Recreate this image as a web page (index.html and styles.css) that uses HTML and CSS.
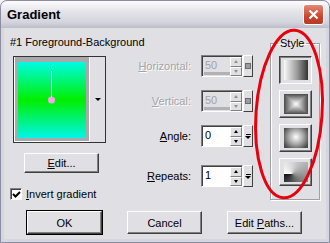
FILE: index.html
```html
<!DOCTYPE html>
<html>
<head>
<title>Gradient</title>
<link rel="stylesheet" href="styles.css">
</head>
<body>
<div class="window">
  <div class="titlebar">
    <span class="title">Gradient</span>
    <span class="close"><svg width="11" height="11"><path d="M1.5 1.5L9.5 9.5M9.5 1.5L1.5 9.5" stroke="#fff" stroke-width="2.2"/></svg></span>
  </div>
  <div class="body">
    <div class="main">
      <div class="leftcol">
        <div class="caption">#1 Foreground-Background</div>
        <div class="preview">
          <div class="swatch">
            <div class="grad">
              <svg width="68" height="76"><line x1="33.5" y1="9" x2="33.5" y2="35" stroke="#fff" stroke-width="1"/><circle cx="33.5" cy="38" r="3.5" fill="#f2a6e6"/></svg>
            </div>
          </div>
          <div class="drop"><i class="tri"></i></div>
        </div>
        <div class="btn edit"><span><u>E</u>dit...</span></div>
        <label class="check"><span class="box"><svg width="9" height="9"><path d="M1 4L3.5 6.5L8 2" stroke="#000" stroke-width="2" fill="none"/></svg></span><span><u>I</u>nvert gradient</span></label>
      </div>

      <div class="fields">
        <span class="lbl off"><u>H</u>orizontal:</span>
        <div class="num off">
          <div class="num-edit"><span class="num-val">50<b class="bar" style="width:26px"></b></span><span class="spin"><i class="up"></i><i class="dn"></i></span></div>
          <span class="pop"><i class="sq"></i></span>
        </div>
        <span class="lbl off"><u>V</u>ertical:</span>
        <div class="num off">
          <div class="num-edit"><span class="num-val">50<b class="bar" style="width:26px"></b></span><span class="spin"><i class="up"></i><i class="dn"></i></span></div>
          <span class="pop"><i class="sq"></i></span>
        </div>
        <span class="lbl"><u>A</u>ngle:</span>
        <div class="num">
          <div class="num-edit"><span class="num-val">0</span><span class="spin"><i class="up"></i><i class="dn"></i></span></div>
          <span class="pop"><i class="pbar"></i><i class="dn"></i></span>
        </div>
        <span class="lbl gap"><u>R</u>epeats:</span>
        <div class="num gap">
          <div class="num-edit"><span class="num-val">1</span><span class="spin"><i class="up"></i><i class="dn"></i></span></div>
          <span class="pop"><i class="pbar"></i><i class="dn"></i></span>
        </div>
      </div>

      <fieldset class="style">
        <legend>Style</legend>
        <div class="sbtn on"><span class="sw sw-linear"></span></div>
        <div class="sbtn"><span class="sw sw-rect"></span></div>
        <div class="sbtn"><span class="sw sw-radial"></span></div>
        <div class="sbtn"><span class="sw sw-conic"></span></div>
      </fieldset>
    </div>

    <div class="buttons">
      <div class="btn default"><span>OK</span></div>
      <div class="btn"><span>Cancel</span></div>
      <div class="btn"><span>Edit <u>P</u>aths...</span></div>
    </div>
  </div>

  <svg class="mark" width="330" height="243"><ellipse cx="289" cy="114" rx="33" ry="84" transform="rotate(4 289 114)" fill="none" stroke="#e8000e" stroke-width="3"/></svg>
</div>
</body>
</html>
```

FILE: styles.css
```css
html, body {
  margin: 0;
  padding: 0;
  background: #f2f2f4;
}

.window {
  position: relative;
  width: 330px;
  height: 243px;
  box-sizing: border-box;
  border: 1px solid #8c8ca2;
  border-radius: 7px 7px 0 0;
  background: #d6d6e0;
  display: flex;
  flex-direction: column;
  font-family: "Liberation Sans", Arial, sans-serif;
  font-size: 11px;
  color: #000;
  overflow: hidden;
}

.titlebar {
  height: 27px;
  flex: none;
  display: flex;
  align-items: center;
  justify-content: space-between;
  padding: 0 5px 0 6px;
  background: linear-gradient(#fdfdfe, #e6e6ec 35%, #d3d3dc 80%, #bdbdca);
  border-radius: 6px 6px 0 0;
}

.title {
  font-weight: bold;
  font-size: 13px;
  color: #000;
}

.close {
  width: 19px;
  height: 19px;
  display: flex;
  align-items: center;
  justify-content: center;
  border: 1px solid #fff;
  border-radius: 3px;
  background: linear-gradient(#e48a76, #c9452f 60%, #b83a26);
}

.body {
  flex: 1;
  margin: 0 3px 3px;
  background: #e0dfe3;
  display: flex;
  flex-direction: column;
}

.main {
  height: 183px;
  display: flex;
  align-items: flex-start;
}

/* left column */
.leftcol {
  width: 100px;
  margin-left: 6px;
  padding-top: 7px;
  display: flex;
  flex-direction: column;
}
.caption {
  line-height: 14px;
  white-space: nowrap;
}
.preview {
  margin: 7px 0 0 3px;
  width: 93px;
  height: 87px;
  box-sizing: border-box;
  border: 1px solid #333;
  display: flex;
}
.swatch {
  width: 76px;
  box-sizing: border-box;
  background: #a9a9ab;
  border: 1px solid #fff;
  border-top: 0;
  padding: 5px 3px 3px 3px;
}
.grad {
  width: 68px;
  height: 76px;
  background: linear-gradient(#00fbe4, #00ef00 50%, #00f6e8);
}
.grad svg { display: block; }
.drop {
  flex: 1;
  background: #e0dfe3;
  display: flex;
  align-items: center;
  justify-content: center;
}
.tri {
  border-left: 3px solid transparent;
  border-right: 3px solid transparent;
  border-top: 3px solid #000;
}

.btn {
  height: 23px;
  width: 75px;
  box-sizing: border-box;
  border: 1px solid;
  border-color: #fff #404040 #404040 #fff;
  box-shadow: inset -1px -1px 0 #808080;
  display: flex;
  align-items: center;
  justify-content: center;
  background: #e0dfe3;
  white-space: nowrap;
}
.btn.edit {
  height: 20px;
  margin: 10px 0 0 14px;
}
.btn.default {
  outline: 1px solid #000;
}

.check {
  margin-top: 15px;
  display: flex;
  align-items: center;
  height: 12px;
  white-space: nowrap;
}
.box {
  width: 12px;
  height: 12px;
  box-sizing: border-box;
  margin-right: 4px;
  background: #fff;
  border: 1px solid;
  border-color: #808080 #fff #fff #808080;
  box-shadow: inset 1px 1px 0 #404040;
  display: flex;
  align-items: center;
  justify-content: center;
}
.box svg { display: block; margin: 1px 0 0 1px; }

/* numeric fields */
.fields {
  width: 143px;
  padding-top: 27px;
  display: grid;
  grid-template-columns: 81px 52px;
  column-gap: 10px;
  row-gap: 13px;
  align-items: center;
}
.lbl {
  text-align: right;
  white-space: nowrap;
}
.lbl.off {
  color: #a3a3a8;
  text-shadow: 1px 1px 0 #fff;
}
.gap { margin-top: 5px; }

.num {
  height: 22px;
  display: flex;
}
.num-edit {
  flex: 1;
  display: flex;
  box-sizing: border-box;
  border: 1px solid;
  border-color: #808080 #fff #fff #808080;
  box-shadow: inset 1px 1px 0 #404040;
  background: #fff;
  padding: 1px 0 0 1px;
}
.num-val {
  flex: 1;
  display: flex;
  flex-direction: column;
  justify-content: space-between;
  padding: 2px 0 1px 2px;
  line-height: 12px;
}
.bar {
  height: 3px;
  background: #b2b2b6;
  margin-left: -1px;
}
.off .num-edit { background: #e0dfe3; }
.off .num-val { color: #a3a3a8; }

.spin {
  width: 12px;
  display: flex;
  flex-direction: column;
}
.spin i, .pop {
  box-sizing: border-box;
  background: #e0dfe3;
  border: 1px solid;
  border-color: #fff #808080 #808080 #fff;
  display: flex;
  align-items: center;
  justify-content: center;
}
.spin i { flex: 1; }
.spin i::after {
  content: "";
  border-left: 2.5px solid transparent;
  border-right: 2.5px solid transparent;
}
.spin .up::after { border-bottom: 3px solid #000; }
.spin .dn::after { border-top: 3px solid #000; }
.off .spin .up::after { border-bottom-color: #909090; }
.off .spin .dn::after { border-top-color: #909090; }

.pop {
  width: 10px;
  flex-direction: column;
  gap: 1px;
  border-color: #fff #404040 #404040 #fff;
}
.pop .pbar {
  width: 5px;
  height: 1px;
  background: #000;
}
.pop .dn {
  border-left: 3px solid transparent;
  border-right: 3px solid transparent;
  border-top: 3px solid #000;
}
.pop .sq {
  width: 6px;
  height: 6px;
  box-sizing: border-box;
  background: #9c9ca0;
  border: 1px solid #6c6c70;
}

/* style group */
.style {
  margin: 8px 0 0 17px;
  width: 50px;
  box-sizing: border-box;
  padding: 6px 7px 13px 8px;
  border: 1px solid #a0a0a4;
  box-shadow: inset 1px 1px 0 #fff, 1px 1px 0 #fff;
  display: flex;
  flex-direction: column;
  gap: 6px;
}
.style legend {
  padding: 0 2px;
  margin-left: -1px;
  line-height: 14px;
}
.sbtn {
  width: 33px;
  height: 28px;
  box-sizing: border-box;
  border: 1px solid;
  border-color: #fff #404040 #404040 #fff;
  box-shadow: inset -1px -1px 0 #808080;
  display: flex;
  align-items: center;
  justify-content: center;
}
.sbtn.on {
  border-color: #404040 #fff #fff #404040;
  box-shadow: inset 1px 1px 0 #808080;
}
.sw {
  width: 24px;
  height: 20px;
}
.sw-linear { background: linear-gradient(to right, #fafafa, #9a9a9a 55%, #333); }
.sw-rect {
  background: linear-gradient(to right, #4a4a4a, #fff, #4a4a4a), linear-gradient(#4a4a4a, #fff, #4a4a4a);
  background-blend-mode: darken;
}
.sw-radial { background: radial-gradient(circle at 50% 45%, #fff, #a8a8a8 45%, #4c4c4c 85%); }
.sw-conic { background: conic-gradient(from 270deg at 35% 58%, #fff, #d6d6d6 25%, #9a9a9a 50%, #555 75%, #111); }

/* bottom buttons */
.buttons {
  display: flex;
  gap: 25px;
  padding-left: 23px;
}

.mark {
  position: absolute;
  left: -1px;
  top: -1px;
  pointer-events: none;
}
```
